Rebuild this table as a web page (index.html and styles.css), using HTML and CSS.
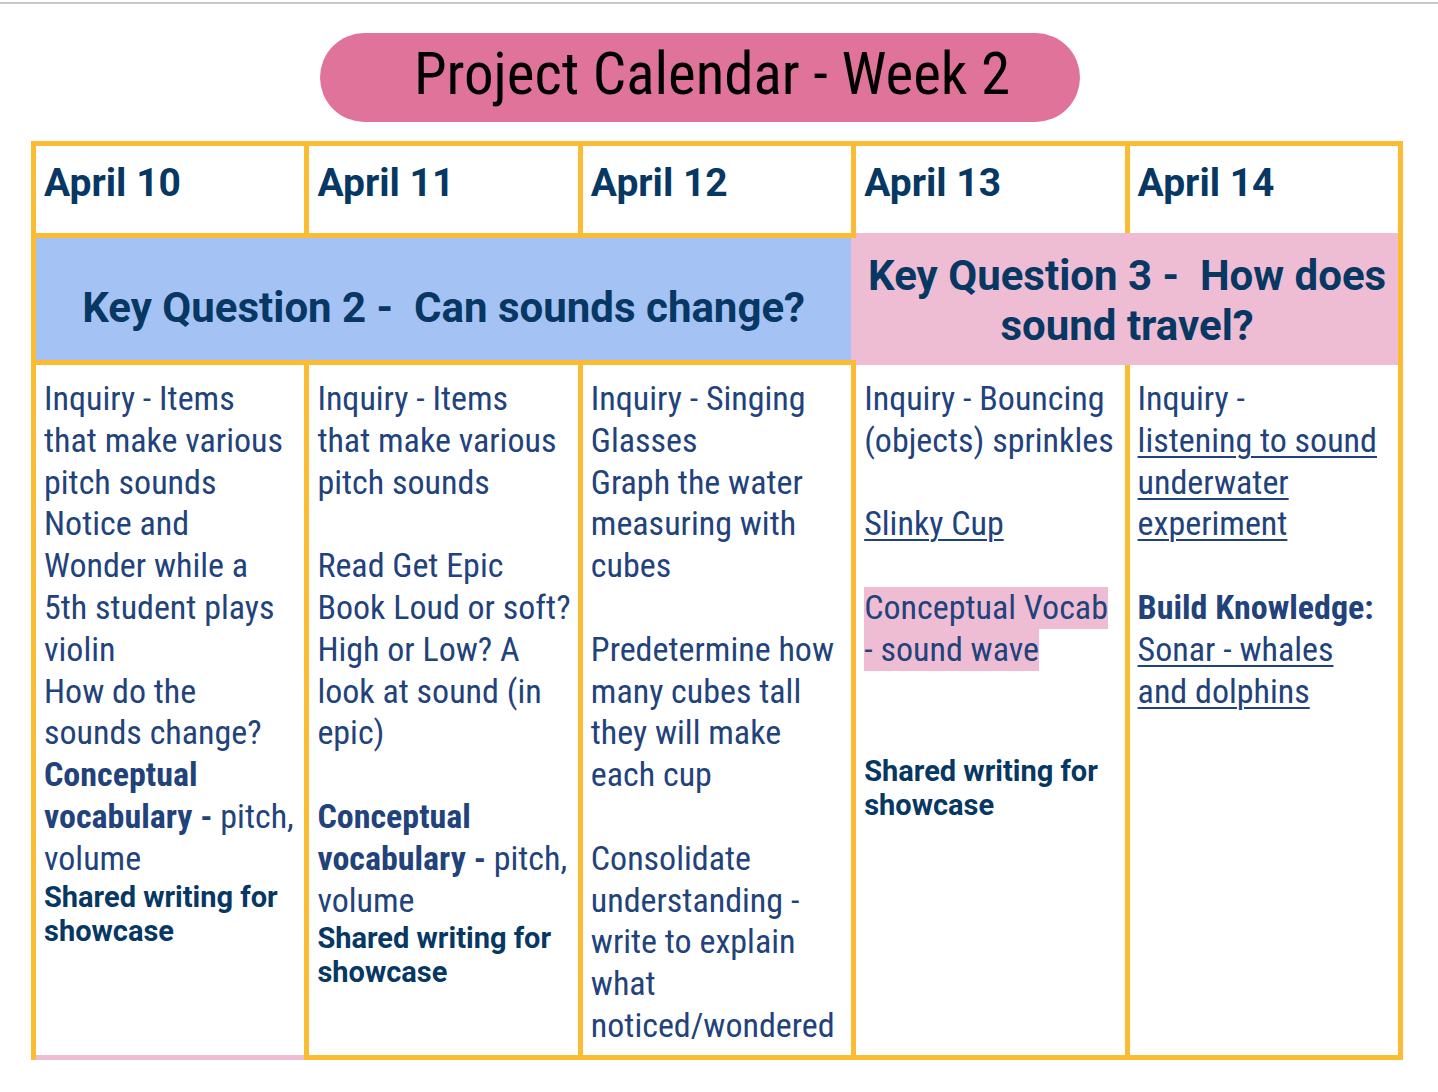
FILE: index.html
```html
<!DOCTYPE html>
<html lang="en">
<head>
<meta charset="utf-8">
<title>Project Calendar - Week 2</title>
<link rel="stylesheet" href="styles.css">
</head>
<body>
<div class="topline"></div>
<header class="pill"><h1 class="title">Project Calendar - Week 2</h1></header>

<div class="cal">
  <div class="day">April 10</div>
  <div class="day">April 11</div>
  <div class="day">April 12</div>
  <div class="day">April 13</div>
  <div class="day">April 14</div>

  <div class="kq kq-blue">Key Question 2 -&nbsp; Can sounds change?</div>
  <div class="kq kq-pink">Key Question 3 -&nbsp; How does<br>sound travel?</div>

  <div class="cell cell-first">
    <p>Inquiry - Items<br>that make various<br>pitch sounds</p>
    <p>Notice and<br>Wonder while a<br>5th student plays<br>violin</p>
    <p>How do the<br>sounds change?</p>
    <p><b>Conceptual<br>vocabulary -</b> pitch,<br>volume</p>
    <p class="shared">Shared writing for<br>showcase</p>
  </div>

  <div class="cell">
    <p>Inquiry - Items<br>that make various<br>pitch sounds</p>
    <p class="blank">&nbsp;</p>
    <p>Read Get Epic<br>Book Loud or soft?<br>High or Low? A<br>look at sound (in<br>epic)</p>
    <p class="blank">&nbsp;</p>
    <p><b>Conceptual<br>vocabulary -</b> pitch,<br>volume</p>
    <p class="shared">Shared writing for<br>showcase</p>
  </div>

  <div class="cell">
    <p>Inquiry - Singing<br>Glasses</p>
    <p>Graph the water<br>measuring with<br>cubes</p>
    <p class="blank">&nbsp;</p>
    <p>Predetermine how<br>many cubes tall<br>they will make<br>each cup</p>
    <p class="blank">&nbsp;</p>
    <p>Consolidate<br>understanding -<br>write to explain<br>what<br>noticed/wondered</p>
  </div>

  <div class="cell">
    <p>Inquiry - Bouncing<br>(objects) sprinkles</p>
    <p class="blank">&nbsp;</p>
    <p><span class="link">Slinky Cup</span></p>
    <p class="blank">&nbsp;</p>
    <p><span class="mark">Conceptual Vocab</span><br><span class="mark">- sound wave</span></p>
    <p class="blank">&nbsp;</p>
    <p class="blank">&nbsp;</p>
    <p class="shared">Shared writing for<br>showcase</p>
  </div>

  <div class="cell">
    <p>Inquiry -<br><span class="link">listening to sound</span><br><span class="link">underwater</span><br><span class="link">experiment</span></p>
    <p class="blank">&nbsp;</p>
    <p><b>Build Knowledge:</b><br><span class="link">Sonar - whales</span><br><span class="link">and dolphins</span></p>
  </div>
</div>
</body>
</html>
```
FILE: styles.css
```css
html, body {
  margin: 0;
  padding: 0;
  background: #ffffff;
}

body {
  width: 1438px;
  min-height: 1092px;
  font-family: "Roboto Condensed", "Roboto", sans-serif;
}

.topline {
  margin-top: 2px;
  height: 2px;
  background: #c9c9c9;
}

.pill {
  margin: 29px 0 0 320px;
  width: 760px;
  height: 89px;
  border-radius: 45px;
  background: #e07399;
  display: flex;
  align-items: center;
  justify-content: center;
  box-sizing: border-box;
  padding: 0 0 8px 24px;
}

.title {
  margin: 0;
  font-family: "Roboto Condensed", "Roboto", sans-serif;
  font-weight: 400;
  font-size: 59px;
  line-height: normal;
  color: #000000;
}

.cal {
  margin: 19px 0 0 31px;
  width: 1372px;
  box-sizing: border-box;
  padding: 5px;
  gap: 5px;
  background: #fbbc34;
  display: grid;
  grid-template-columns: repeat(5, 1fr);
  grid-template-rows: 87px 122px 690px;
}

.day {
  background: #ffffff;
  padding: 14px 0 0 8px;
  font-family: "Roboto", sans-serif;
  font-weight: 700;
  font-size: 39px;
  line-height: 1.2;
  color: #073763;
}

.kq {
  font-family: "Roboto", sans-serif;
  font-weight: 700;
  font-size: 42px;
  line-height: 50px;
  color: #073763;
  text-align: center;
}

.kq-blue {
  grid-column: 1 / span 3;
  background: #a4c2f4;
  padding-top: 45px;
}

.kq-pink {
  grid-column: 4 / span 2;
  background: #efbdd3;
  padding-top: 13px;
  box-shadow: 0 -5px 0 #efbdd3, 0 5px 0 #efbdd3, -5px 0 0 #efbdd3;
}

.cell {
  background: #ffffff;
  padding: 13px 2px 0 8px;
  font-size: 34px;
  line-height: 41.8px;
  color: #22427c;
  white-space: nowrap;
}

.cell-first {
  box-shadow: 0 5px 0 #efbdd3;
}

.cell p {
  margin: 0;
}

.cell b {
  font-weight: 700;
}

.cell .shared {
  font-family: "Roboto", sans-serif;
  font-weight: 700;
  font-size: 29px;
  line-height: 34px;
  color: #073763;
}

.link {
  text-decoration: underline;
  text-decoration-thickness: 2px;
  text-underline-offset: 4px;
}

.mark {
  background: #efbdd3;
  padding-bottom: 2px;
}
```
